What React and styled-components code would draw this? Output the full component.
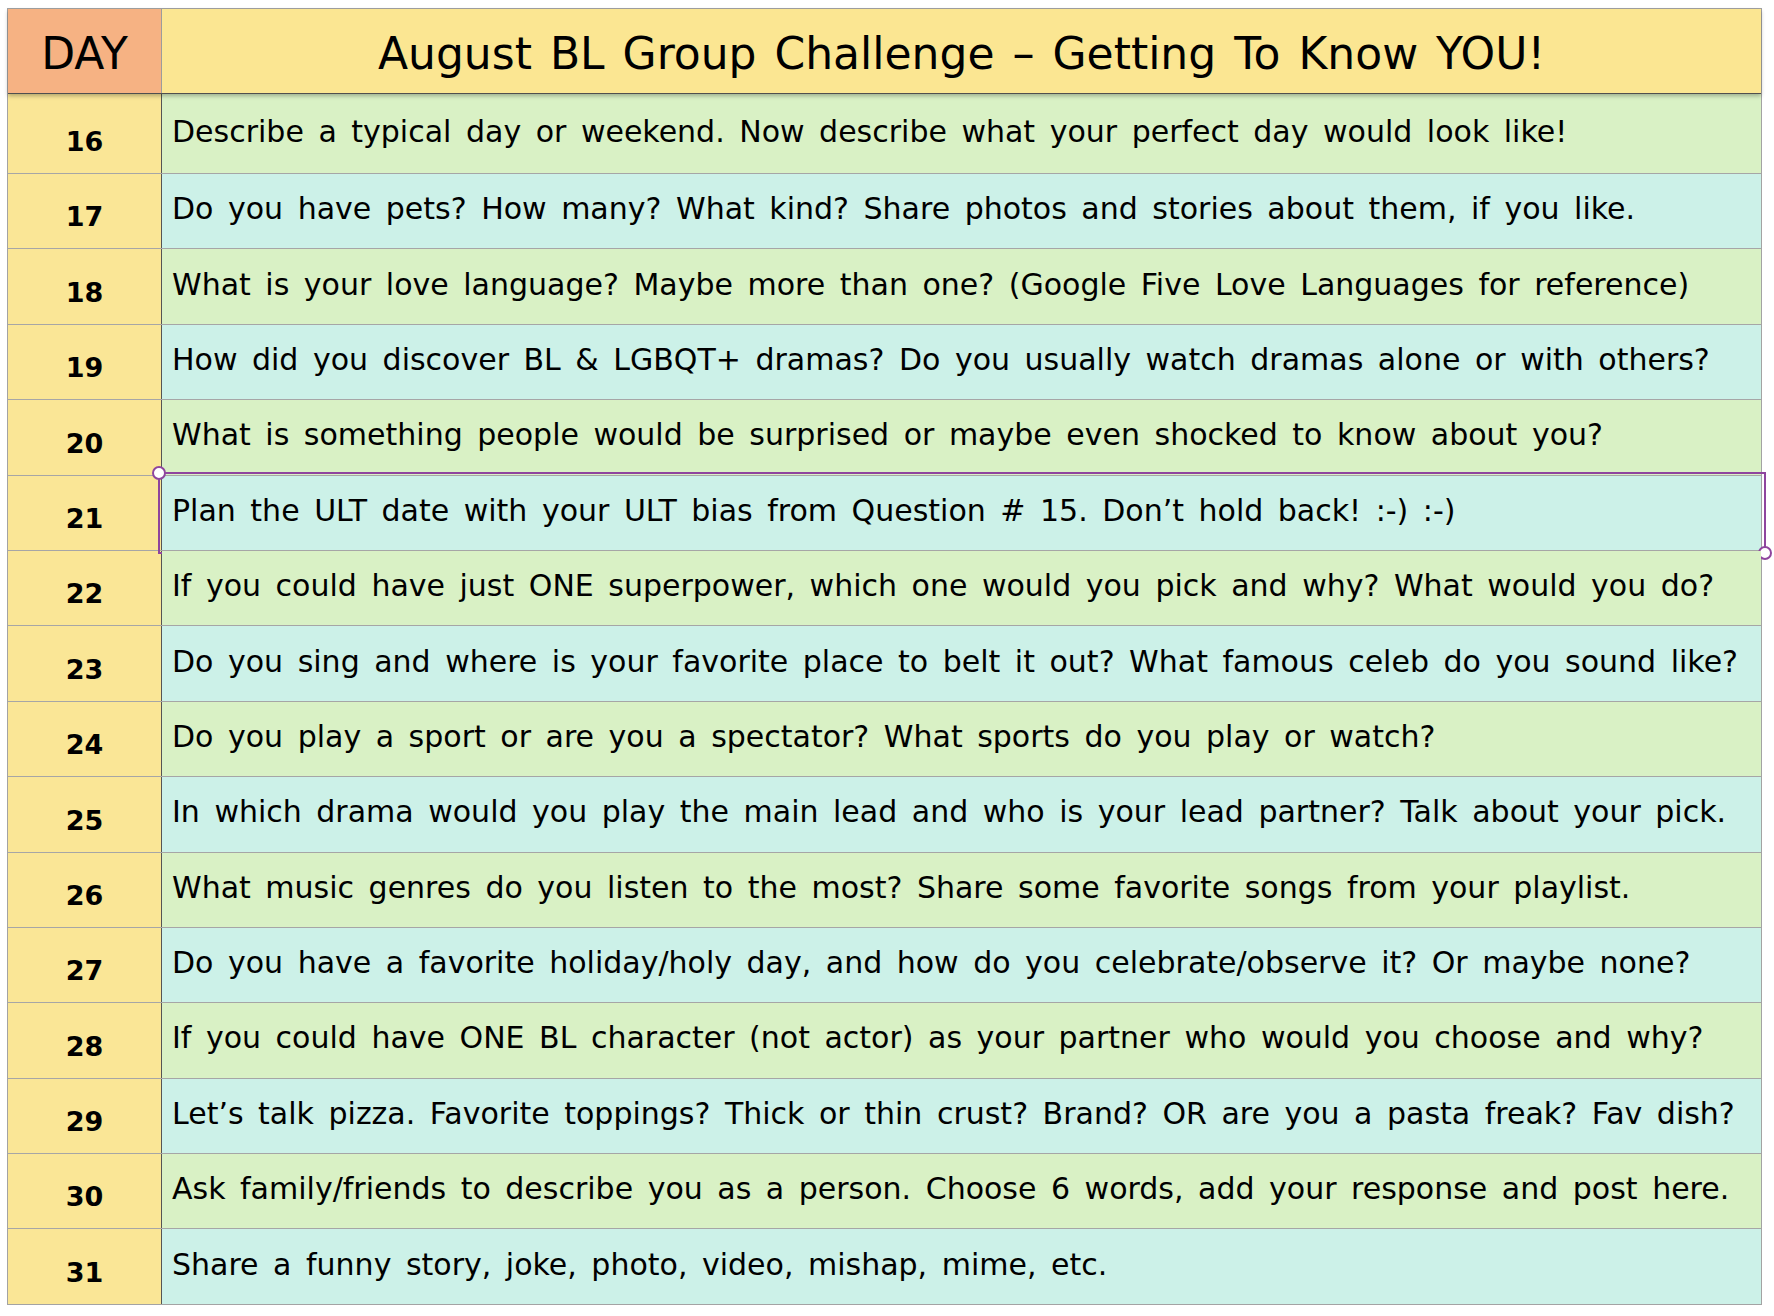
import React from "react";
import styled, { createGlobalStyle } from "styled-components";

const GlobalStyle = createGlobalStyle`
	html, body {
		margin: 0;
		padding: 0;
		background: #ffffff;
	}
	body {
		font-family: "DejaVu Sans", "Liberation Sans", sans-serif;
		color: #000;
	}
`;

const Page = styled.div`
	padding: 8px 0 0 7px;
`;

const Sheet = styled.div`
	width: 1755px;
	border: 1px solid #a3a3a3;
	box-sizing: border-box;
	display: flex;
	flex-direction: column;
`;

const HeaderRow = styled.div`
	display: grid;
	grid-template-columns: 154px 1fr;
	height: 84px;
	border-bottom: 1px solid #4f4f4f;
	box-shadow: 0 2px 4px rgba(0, 0, 0, 0.28);
	position: relative;
	z-index: 2;
`;

const DayHead = styled.div`
	background: #f6b283;
	border-right: 1px solid #9c9c9c;
	display: flex;
	align-items: center;
	justify-content: center;
	padding-top: 5px;
	font-size: 44px;
`;

const TitleHead = styled.div`
	background: #fbe692;
	display: flex;
	align-items: center;
	justify-content: center;
	padding-top: 5px;
	font-size: 44px;
	word-spacing: 4px;
`;

const Row = styled.div`
	display: grid;
	grid-template-columns: 154px 1fr;
	height: ${(p) => p.$height}px;
	border-top: ${(p) => (p.$first ? "none" : "1px solid #a6a6a6")};
	box-sizing: border-box;
`;

const DayCell = styled.div`
	background: #fae696;
	border-right: 1px solid #555555;
	display: flex;
	align-items: flex-end;
	justify-content: center;
	padding-bottom: 16px;
	font-size: 27px;
	font-weight: bold;
`;

const TONES = {
	green: "#d9f1c5",
	teal: "#ccf1e8",
};

const TextCell = styled.div`
	position: relative;
	background: ${(p) => TONES[p.$tone]};
	display: flex;
	align-items: center;
	padding: 0 0 5px 10px;
	font-size: 30px;
	word-spacing: 5px;
	white-space: nowrap;
`;

const Selection = styled.div`
	position: absolute;
	top: -4px;
	left: -4px;
	right: -5px;
	bottom: -4px;
	border: 2px solid #8e459e;
	pointer-events: none;
`;

const Handle = styled.span`
	position: absolute;
	width: 10px;
	height: 10px;
	border-radius: 50%;
	background: #ffffff;
	border: 2px solid #8e459e;
	${(p) => (p.$corner === "tl" ? "top: -8px; left: -8px;" : "bottom: -8px; right: -8px;")}
`;

const ROWS = [
	[16, "Describe a typical day or weekend. Now describe what your perfect day would look like!"],
	[17, "Do you have pets? How many? What kind? Share photos and stories about them, if you like."],
	[18, "What is your love language? Maybe more than one? (Google Five Love Languages for reference)"],
	[19, "How did you discover BL & LGBQT+ dramas? Do you usually watch dramas alone or with others?"],
	[20, "What is something people would be surprised or maybe even shocked to know about you?"],
	[21, "Plan the ULT date with your ULT bias from Question # 15. Don\u2019t hold back! :-) :-)"],
	[22, "If you could have just ONE superpower, which one would you pick and why? What would you do?"],
	[23, "Do you sing and where is your favorite place to belt it out? What famous celeb do you sound like?"],
	[24, "Do you play a sport or are you a spectator? What sports do you play or watch?"],
	[25, "In which drama would you play the main lead and who is your lead partner? Talk about your pick."],
	[26, "What music genres do you listen to the most? Share some favorite songs from your playlist."],
	[27, "Do you have a favorite holiday/holy day, and how do you celebrate/observe it? Or maybe none?"],
	[28, "If you could have ONE BL character (not actor) as your partner who would you choose and why?"],
	[29, "Let\u2019s talk pizza. Favorite toppings? Thick or thin crust? Brand? OR are you a pasta freak? Fav dish?"],
	[30, "Ask family/friends to describe you as a person. Choose 6 words, add your response and post here."],
	[31, "Share a funny story, joke, photo, video, mishap, mime, etc."],
];

const App = () => {
	return (
		<>
			<GlobalStyle />
			<Page>
				<Sheet>
					<HeaderRow>
						<DayHead>DAY</DayHead>
						<TitleHead>August BL Group Challenge – Getting To Know YOU!</TitleHead>
					</HeaderRow>
					{ROWS.map(([day, text], i) => (
						<Row key={day} $first={i === 0} $height={i === 0 ? 79 : 75.4}>
							<DayCell>{day}</DayCell>
							<TextCell $tone={i % 2 === 0 ? "green" : "teal"}>
								{text}
								{day === 21 && (
									<Selection>
										<Handle $corner="tl" />
										<Handle $corner="br" />
									</Selection>
								)}
							</TextCell>
						</Row>
					))}
				</Sheet>
			</Page>
		</>
	);
};

export default App;
